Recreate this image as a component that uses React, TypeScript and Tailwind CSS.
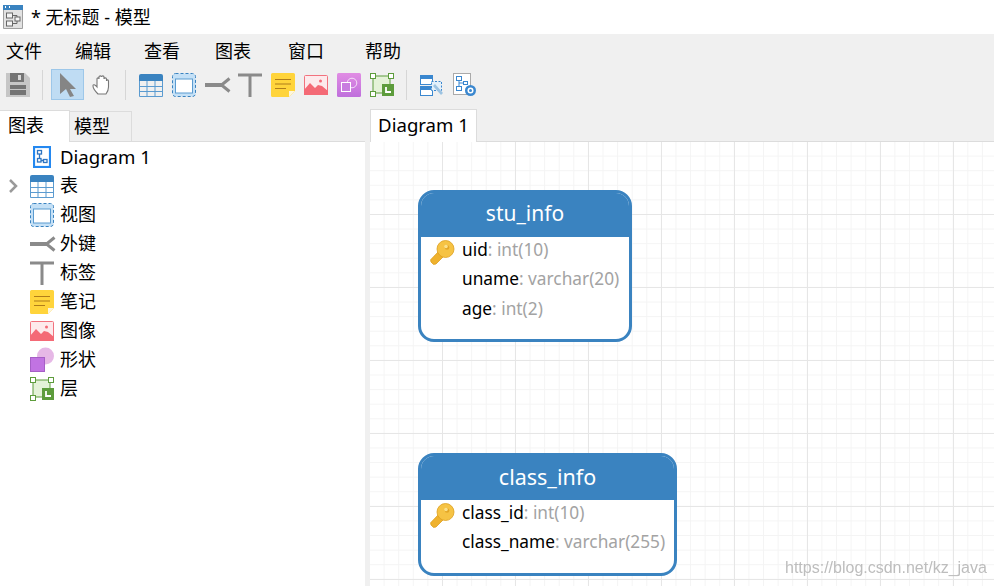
import React from "react";

const Table = ({ s = 24 }: { s?: number }) => (
  <svg width={s} height={s} viewBox="0 0 24 24" className="block">
    <path d="M0 3a2 2 0 0 1 2-2h20a2 2 0 0 1 2 2v5H0z" fill="#3a83c0" />
    <path d="M.5 8v15.5h23V8M.5 13.5h23M.5 18.5h23M8 8v15.5M16 8v15.5" fill="none" stroke="#5b9bd0" />
  </svg>
);
const View = () => (
  <svg width="24" height="24" viewBox="0 0 24 24" className="block">
    <rect x="0.500" y="0.500" width="23" height="23" rx="3" fill="#c4e0f6" stroke="#3a83c0" strokeDasharray="3 2" />
    <rect x="3.500" y="6" width="17" height="14" fill="#fff" stroke="#5b9bd0" />
  </svg>
);
const Fk = () => (
  <svg width="26" height="24" viewBox="0 0 26 24" className="block">
    <path d="M0 12h17" stroke="#8a8a8a" strokeWidth="4" />
    <path d="M24.500 5.500l-8 6.500 8 6.500" fill="none" stroke="#8a8a8a" strokeWidth="3" />
  </svg>
);
const TIcon = () => (
  <svg width="24" height="24" viewBox="0 0 24 24" className="block">
    <path d="M0 2h24M12 2v22" stroke="#8a8a8a" strokeWidth="3" />
  </svg>
);
const Note = () => (
  <svg width="24" height="24" viewBox="0 0 24 24" className="block">
    <path d="M1.500 0h21A1.500 1.500 0 0 1 24 1.500V18l-6 6H1.500A1.500 1.500 0 0 1 0 22.500V1.500A1.500 1.500 0 0 1 1.500 0z" fill="#ffd43b" />
    <path d="M18 24v-6h6z" fill="#fdf6dc" />
    <path d="M4 6.500h16M4 11h16M4 15.500h11" stroke="#b07d1a" strokeWidth="1.200" />
  </svg>
);
const Pic = () => (
  <svg width="24" height="20" viewBox="0 0 24 20" className="block">
    <rect x="0.500" y="0.500" width="23" height="19" rx="1" fill="#fdeaec" stroke="#f2727e" />
    <path d="M0 20v-5l6-7 5 5 3-3 4 1 6 5v4z" fill="#f46a76" />
    <circle cx="16.500" cy="6" r="1.500" fill="#f46a76" />
  </svg>
);
const Shape = ({ toolbar }: { toolbar?: boolean }) =>
  toolbar ? (
    <svg width="24" height="24" viewBox="0 0 24 24" className="block">
      <defs>
        <linearGradient id="sg" x1="0" y1="0" x2="0" y2="1">
          <stop offset="0" stopColor="#e18de4" />
          <stop offset="1" stopColor="#bf6fdc" />
        </linearGradient>
      </defs>
      <rect width="24" height="24" rx="1.500" fill="url(#sg)" />
      <circle cx="15" cy="10" r="4.800" fill="none" stroke="#f5dff8" />
      <rect x="4.500" y="9.500" width="9" height="9" fill="#c97de0" stroke="#fff" />
    </svg>
  ) : (
    <svg width="25" height="26" viewBox="0 0 25 26" className="block">
      <circle cx="15.500" cy="9" r="8.500" fill="#e6b8e6" />
      <rect x="0.500" y="10.500" width="14" height="14" fill="#c173e2" stroke="#a65fc6" />
    </svg>
  );
const Layer = () => (
  <svg width="24" height="24" viewBox="0 0 24 24" className="block">
    <rect x="3" y="3" width="17" height="17" fill="#e4f2d8" stroke="#5d9c3c" />
    <rect x="0.500" y="0.500" width="5" height="5" fill="#fff" stroke="#5d9c3c" />
    <rect x="18.500" y="0.500" width="5" height="5" fill="#fff" stroke="#5d9c3c" />
    <rect x="0.500" y="18.500" width="5" height="5" fill="#fff" stroke="#5d9c3c" />
    <rect x="12" y="11" width="12" height="12" fill="#5d9c3c" />
    <path d="M16 14v5h5" fill="none" stroke="#fff" strokeWidth="1.800" />
  </svg>
);
const Diagram = () => (
  <svg width="18" height="22" viewBox="0 0 18 22" className="block">
    <rect x="1" y="1" width="16" height="20" fill="#fff" stroke="#2488f0" strokeWidth="2.200" />
    <rect x="4.500" y="4.500" width="4" height="3.500" fill="none" stroke="#2f74c0" strokeWidth="1.300" />
    <rect x="4.500" y="12.500" width="3.500" height="3.500" fill="none" stroke="#2f74c0" strokeWidth="1.300" />
    <rect x="10.500" y="13.500" width="3.500" height="3" fill="none" stroke="#2f74c0" strokeWidth="1.300" />
    <path d="M6.500 8v4.500M8 14.500h2.500" stroke="#2f74c0" strokeWidth="1.300" />
  </svg>
);
const Key = () => (
  <svg width="25" height="25" viewBox="0 0 25 25" className="block">
    <path d="M9 11L.6 19.800 1 22l2.500 2.400 2.500-.4L14 16z" fill="#efb22e" stroke="#dd9f1f" strokeWidth="0.800" />
    <circle cx="15.500" cy="9" r="8.500" fill="#f6c344" stroke="#dd9f1f" strokeWidth="0.800" />
    <circle cx="17" cy="7.500" r="2.300" fill="#e3a626" />
    <circle cx="16" cy="6.500" r="1.800" fill="#fbe08a" />
  </svg>
);
const Save = () => (
  <svg width="24" height="24" viewBox="0 0 24 24" className="block">
    <path d="M0 0h19l5 5v19H0z" fill="#c6c6c6" />
    <rect x="4" y="0" width="14" height="9" fill="#747474" />
    <rect x="12" y="2" width="3" height="5" fill="#d8d8d8" />
    <rect x="4" y="12" width="16" height="10" fill="#747474" />
    <path d="M4 16.500h16" stroke="#c6c6c6" />
  </svg>
);
const Pointer = () => (
  <svg width="18" height="24" viewBox="0 0 18 24" className="block">
    <path d="M1 0l16 16h-6l4 7-4 1-4-8-6 5z" fill="#858585" />
  </svg>
);
const Hand = () => (
  <svg width="20" height="22" viewBox="0 0 20 22" className="block">
    <path
      d="M6 20c-2-2-5-6-5-8s2-1.500 4 1V5c0-1.500 2-1.500 2 0V3c0-1.500 2.500-1.500 2.500 0v0c0-1.500 2.500-1.500 2.500 0v2c0-1.500 2.500-1.500 2.500 0v2c0-1.500 2-1.500 2 0v6c0 3-1 5-2.500 7z"
      fill="#fff"
      stroke="#777"
      strokeWidth="1.100"
    />
  </svg>
);
const TitleIcon = () => (
  <svg width="20" height="24" viewBox="0 0 20 24" className="block">
    <path d="M.5.500h19v23H.5z" fill="#e2e2e2" stroke="#a0a0a0" />
    <rect x="0" y="0" width="20" height="5" fill="#3a83c0" />
    <path d="M2.500 1v2M6.500 1v2" stroke="#fff" />
    <rect x="3.500" y="8" width="6" height="5" fill="#f4f4f4" stroke="#666" />
    <rect x="3.500" y="16" width="6" height="5" fill="#f4f4f4" stroke="#666" />
    <rect x="12" y="12" width="5" height="4" fill="#f4f4f4" stroke="#666" />
    <path d="M9.500 10.500H14V12M9.500 18.500H14V16" fill="none" stroke="#666" />
  </svg>
);
const Wand = () => (
  <svg width="24" height="24" viewBox="0 0 24 24" className="block">
    <rect x="0.500" y="2.500" width="12" height="9" fill="#fff" stroke="#3a87cf" />
    <rect x="0" y="2" width="13" height="4" fill="#3a87cf" />
    <rect x="0.500" y="13.500" width="12" height="9" fill="#fff" stroke="#3a87cf" />
    <rect x="0" y="13" width="13" height="4" fill="#3a87cf" />
    <rect x="11.500" y="8.500" width="10" height="9" fill="#e3f0fa" stroke="#3a87cf" strokeDasharray="2 1.500" />
    <path d="M15 11l8 9-2 2-8-9z" fill="#9cc3e2" />
  </svg>
);
const Eye = () => (
  <svg width="24" height="24" viewBox="0 0 24 24" className="block">
    <rect x="0.500" y="0.500" width="17" height="21" fill="#fff" stroke="#aaa" />
    <rect x="3.500" y="3.500" width="5" height="4" fill="#fff" stroke="#3a87cf" />
    <rect x="3.500" y="13.500" width="5" height="4" fill="#fff" stroke="#3a87cf" />
    <rect x="10.500" y="8.500" width="4" height="3" fill="#fff" stroke="#3a87cf" />
    <path d="M6 7.500v6M6 10h4.500" stroke="#3a87cf" />
    <circle cx="17.500" cy="17.500" r="5.500" fill="#3a87cf" />
    <circle cx="17.500" cy="17.500" r="3" fill="#fff" />
    <circle cx="17.500" cy="17.500" r="1.500" fill="#3a87cf" />
  </svg>
);

const menus: [string, string][] = [
  ["文件", "w-[69px]"],
  ["编辑", "w-[69px]"],
  ["查看", "w-[71px]"],
  ["图表", "w-[73px]"],
  ["窗口", "w-[77px]"],
  ["帮助", "w-[60px]"],
];

const Sep = () => <div className="w-px h-[30px] bg-[#d6d6d6]" />;

const tree: [React.ReactNode, string][] = [
  [<div className="w-6 flex justify-center"><Diagram /></div>, "Diagram 1"],
  [<Table />, "表"],
  [<View />, "视图"],
  [<Fk />, "外键"],
  [<TIcon />, "标签"],
  [<Note />, "笔记"],
  [<Pic />, "图像"],
  [<Shape />, "形状"],
  [<Layer />, "层"],
];

type Col = [string, string];
const EntityTable = ({ name, headClass, cols, className }: { name: string; headClass: string; cols: Col[]; className: string }) => (
  <div className={"absolute rounded-[16px] border-[3px] border-[#3a83c0] bg-white overflow-hidden " + className}>
    <div className={"h-[44px] pb-[2px] bg-[#3a83c0] text-white flex items-center justify-center " + headClass}>{name}</div>
    <div className="-mt-[2px]">
      {cols.map(([n, t], i) => (
        <div key={n} className="relative h-[29.500px] pl-[41px] text-[17.300px] flex items-center whitespace-nowrap">
          {i === 0 && (
            <div className="absolute left-[9px] top-[5px]">
              <Key />
            </div>
          )}
          <span className="text-black">{n}</span>
          <span className="text-[#a3a3a3]">: {t}</span>
        </div>
      ))}
    </div>
  </div>
);

export default function App() {
  return (
    <div className="w-[994px] h-[586px] overflow-hidden flex flex-col bg-white text-black font-['Noto_Sans','Noto_Sans_CJK_SC',sans-serif]">
      <div className="h-[34px] shrink-0 flex items-center pl-[3px] text-[18px]">
        <TitleIcon />
        <span className="ml-2">* 无标题 - 模型</span>
      </div>
      <div className="h-[76px] shrink-0 bg-[#f0f0f0] flex flex-col">
        <div className="h-[35px] pl-[6px] flex items-center text-[18px]">
          {menus.map(([m, w]) => (
            <div key={m} className={w}>{m}</div>
          ))}
        </div>
        <div className="h-[31px] pl-[6px] flex items-center">
          <Save />
          <div className="ml-3"><Sep /></div>
          <div className="ml-2 w-[33px] h-[31px] bg-[#bfdcf3] border border-[#9dc7e9] flex items-center justify-center">
            <Pointer />
          </div>
          <div className="ml-2"><Hand /></div>
          <div className="ml-[13px]"><Sep /></div>
          <div className="ml-[13px] flex items-center gap-[9px]">
            <Table />
            <View />
            <Fk />
            <div className="-ml-[2px]"><TIcon /></div>
            <Note />
            <Pic />
            <Shape toolbar />
            <Layer />
          </div>
          <div className="ml-3"><Sep /></div>
          <div className="ml-[13px] flex items-center gap-[9px]">
            <Wand />
            <Eye />
          </div>
        </div>
      </div>
      <div className="flex-1 flex min-h-0 bg-[#f0f0f0]">
        <div className="w-[365px] shrink-0 flex flex-col">
          <div className="h-[32px] shrink-0 flex items-end border-b border-[#dcdcdc] text-[18px]">
            <div className="relative -mb-px w-[70px] h-[32px] pb-[2px] bg-white border-r border-t border-[#dcdcdc] pl-2 flex items-center">图表</div>
            <div className="w-[62px] h-[30px] border-r border-t border-[#dcdcdc] pl-[4px] flex items-center">模型</div>
          </div>
          <div className="flex-1 bg-white">
            {tree.map(([icon, label], i) => (
              <div key={label} className={"h-[29px] flex items-center relative " + (i === 0 ? "text-[18.600px]" : "text-[18px]")}>
                {i === 1 && (
                  <svg width="11" height="14" viewBox="0 0 11 14" className="absolute left-[8px] top-[8px]">
                    <path d="M2 1l6 6-6 6" fill="none" stroke="#9a9a9a" strokeWidth="2.500" />
                  </svg>
                )}
                <div className="ml-[30px] w-[30px] flex items-center">{icon}</div>
                <span>{label}</span>
              </div>
            ))}
          </div>
        </div>
        <div className="w-[5px] shrink-0" />
        <div className="flex-1 flex flex-col min-w-0">
          <div className="h-[32px] shrink-0 flex items-end border-b border-[#dcdcdc]">
            <div className="relative -mb-px w-[107px] h-[33px] pb-[3px] bg-white border-x border-t border-[#dcdcdc] flex items-center justify-center text-[18.600px]">
              Diagram 1
            </div>
          </div>
          <div className="relative flex-1 bg-white bg-[linear-gradient(to_right,#e6e6e6_1px,transparent_1px),linear-gradient(to_bottom,#e6e6e6_1px,transparent_1px),linear-gradient(to_right,#f4f4f4_1px,transparent_1px),linear-gradient(to_bottom,#f4f4f4_1px,transparent_1px)] bg-[size:73px_73px,73px_73px,14.600px_14.600px,14.600px_14.600px] bg-[position:-1px_-1px]">
            <EntityTable
              name="stu_info"
              headClass="text-[21px]"
              className="left-[48px] top-[48px] w-[214px] h-[152px]"
              cols={[
                ["uid", "int(10)"],
                ["uname", "varchar(20)"],
                ["age", "int(2)"],
              ]}
            />
            <EntityTable
              name="class_info"
              headClass="text-[21.500px]"
              className="left-[48px] top-[311px] w-[259px] h-[123px]"
              cols={[
                ["class_id", "int(10)"],
                ["class_name", "varchar(255)"],
              ]}
            />
            <div className="absolute left-[415px] top-[414px] text-[16px] text-[#bdbdbd] blur-[0.5px] whitespace-nowrap font-['Liberation_Sans',sans-serif]">
              https://blog.csdn.net/kz_java
            </div>
          </div>
        </div>
      </div>
    </div>
  );
}
